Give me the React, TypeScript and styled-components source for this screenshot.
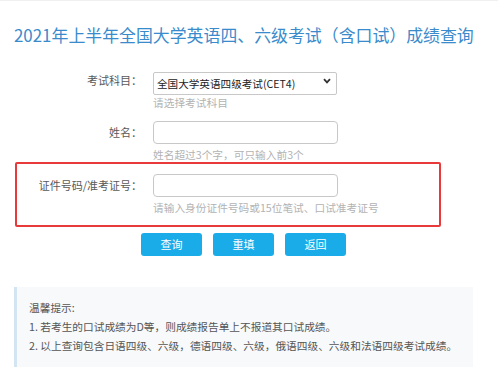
import React from "react";
import styled, { createGlobalStyle } from "styled-components";

const Global = createGlobalStyle`
  html, body { margin: 0; padding: 0; background: #fff; }
  body { font-family: "Noto Sans CJK SC", "Microsoft YaHei", "Noto Sans", sans-serif; }
  * { box-sizing: border-box; }
`;

const Page = styled.div`
  width: 498px;
  height: 385px;
  border-top: 1px solid #f0f0f0;
  padding-top: 22px;
  overflow: hidden;
`;

const Title = styled.h1`
  margin: 0;
  padding-left: 14px;
  font-size: 16.9px;
  font-weight: 400;
  line-height: 24px;
  color: #3a8bcb;
  white-space: nowrap;
`;

const Form = styled.div`
  margin-top: 22px;
  display: flex;
  flex-direction: column;
`;

const Row = styled.div<{ $offset?: number; $gapAfter?: number }>`
  display: grid;
  grid-template-columns: ${(p) => 142 - (p.$offset ?? 0)}px 185px;
  column-gap: 11px;
  align-items: start;
  margin-bottom: ${(p) => p.$gapAfter ?? 0}px;
`;

const Label = styled.label`
  text-align: right;
  font-size: 11px;
  line-height: 23px;
  color: #595959;
  white-space: nowrap;
`;

const Field = styled.div`
  display: flex;
  flex-direction: column;
`;

const SelectWrap = styled.div`
  position: relative;
  width: 184px;
  height: 23px;
`;

const Select = styled.select`
  appearance: none;
  -webkit-appearance: none;
  width: 100%;
  height: 100%;
  border: 1px solid #c8c8c8;
  border-radius: 2px;
  background: #fff;
  padding: 0 0 0 3px;
  font-family: inherit;
  font-size: 10.6px;
  color: #222;
  outline: none;
`;

const Chevron = styled.svg`
  position: absolute;
  right: 6px;
  top: 9px;
  pointer-events: none;
`;

const TextInput = styled.input`
  width: 185px;
  height: 23px;
  border: 1px solid #c8c8c8;
  border-radius: 4px;
  background: #fff;
  outline: none;
  padding: 0 6px;
  font-family: inherit;
`;

const Hint = styled.div`
  margin-top: 3px;
  font-size: 10.7px;
  line-height: 16px;
  color: #b3b3b3;
  white-space: nowrap;
`;

const Highlight = styled.div`
  margin: -1px 0 0 15px;
  width: 426px;
  border: 2px solid #e8393b;
  border-radius: 2px;
  padding: 10px 0 9px;
`;

const Buttons = styled.div`
  display: flex;
  gap: 11px;
  padding-left: 141px;
  margin-top: 6px;
`;

const Button = styled.button`
  width: 61px;
  height: 23px;
  border: none;
  border-radius: 3px;
  background: #1aace9;
  color: #fff;
  font-family: inherit;
  font-size: 11px;
  line-height: 23px;
  padding: 0;
  cursor: pointer;
`;

const Tips = styled.div`
  margin: 31px 0 0 14px;
  width: 459px;
  height: 80px;
  border-left: 3px solid #d3e4f3;
  background: #f8f9fa;
  padding: 11px 0 0 12px;
  font-size: 10.7px;
  line-height: 19px;
  color: #555;
`;

const TipLine = styled.div`
  white-space: nowrap;
`;

export default function App() {
  return (
    <>
      <Global />
      <Page>
        <Title>2021年上半年全国大学英语四、六级考试（含口试）成绩查询</Title>
        <Form>
          <Row $gapAfter={10}>
            <Label>考试科目：</Label>
            <Field>
              <SelectWrap>
                <Select defaultValue="cet4">
                  <option value="cet4">全国大学英语四级考试(CET4)</option>
                  <option value="cet6">全国大学英语六级考试(CET6)</option>
                </Select>
                <Chevron width="8" height="6" viewBox="0 0 8 6">
                  <path d="M1 1.2 L4 4.4 L7 1.2" fill="none" stroke="#333" strokeWidth="1.8" />
                </Chevron>
              </SelectWrap>
              <Hint>请选择考试科目</Hint>
            </Field>
          </Row>
          <Row>
            <Label>姓名：</Label>
            <Field>
              <TextInput type="text" />
              <Hint>姓名超过3个字，可只输入前3个</Hint>
            </Field>
          </Row>
          <Highlight>
            <Row $offset={17}>
              <Label>证件号码/准考证号：</Label>
              <Field>
                <TextInput type="text" />
                <Hint>请输入身份证件号码或15位笔试、口试准考证号</Hint>
              </Field>
            </Row>
          </Highlight>
          <Buttons>
            <Button>查询</Button>
            <Button>重填</Button>
            <Button>返回</Button>
          </Buttons>
        </Form>
        <Tips>
          <TipLine>温馨提示:</TipLine>
          <TipLine>1. 若考生的口试成绩为D等，则成绩报告单上不报道其口试成绩。</TipLine>
          <TipLine>2. 以上查询包含日语四级、六级，德语四级、六级，俄语四级、六级和法语四级考试成绩。</TipLine>
        </Tips>
      </Page>
    </>
  );
}
